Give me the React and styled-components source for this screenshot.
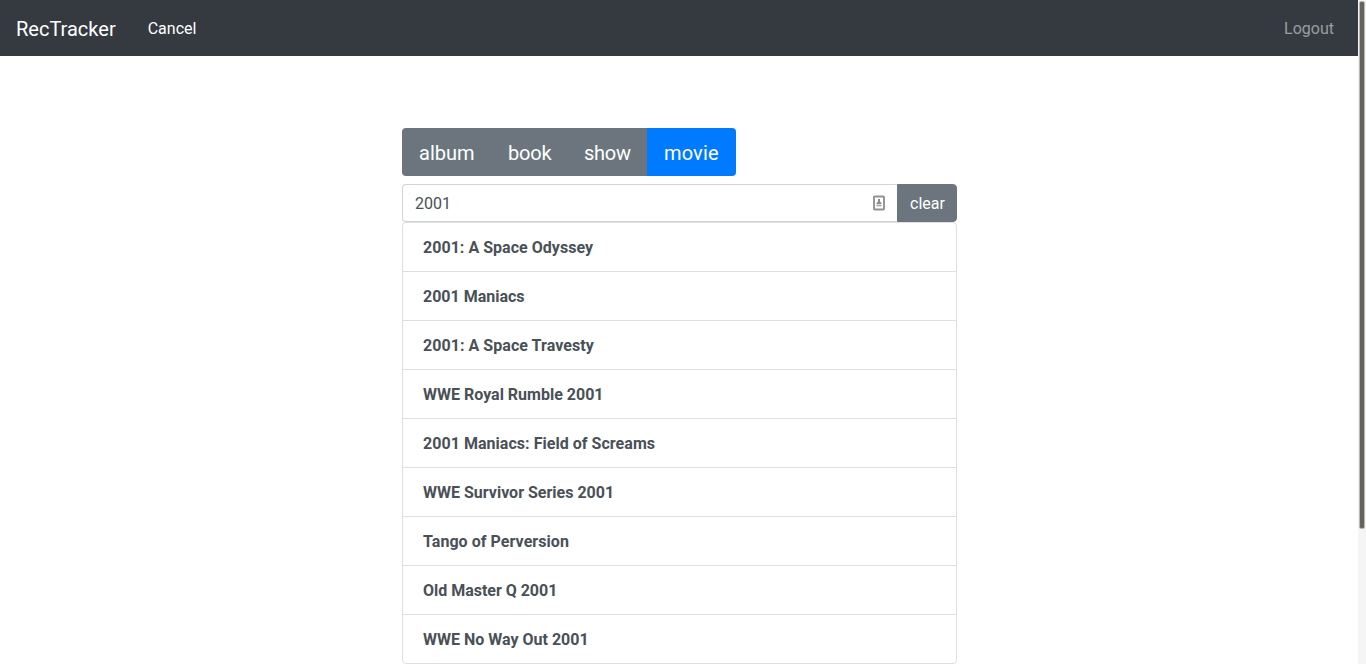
import React, { useState } from "react";
import styled, { createGlobalStyle } from "styled-components";

const GlobalStyle = createGlobalStyle`
  *, *::before, *::after { box-sizing: border-box; }
  body {
    margin: 0;
    background: #fff;
    color: #212529;
    font: 400 16px/1.5 Roboto, "Liberation Sans", sans-serif;
    overflow: hidden;
  }
  button, input { font-family: inherit; margin: 0; }
`;

const Screen = styled.div`
  display: flex;
  height: 664px;
  overflow: hidden;
`;

const Page = styled.div`
  flex: 1;
  min-width: 0;
`;

const Navbar = styled.nav`
  display: flex;
  align-items: center;
  height: 56px;
  padding: 10px 16px 8px;
  background: #343a40;
`;

const Brand = styled.a`
  margin-right: 24px;
  color: #fff;
  font-size: 20px;
  line-height: 30px;
`;

const NavLink = styled.a`
  padding: 8px;
  color: ${(p) => (p.$active ? "#fff" : "rgba(255, 255, 255, 0.5)")};
  margin-left: ${(p) => (p.$end ? "auto" : "0")};
`;

const Content = styled.main`
  width: 555px;
  margin: 72px 0 0 402px;
`;

const ButtonGroup = styled.div`
  display: grid;
  grid-template-columns: 89px 76px 80px 89px;
  width: 334px;
  margin-bottom: 8px;
  border-radius: 4px;
  overflow: hidden;
`;

const TypeButton = styled.button`
  height: 48px;
  padding: 10px 0 8px 17px;
  border: 0;
  background: ${(p) => (p.$active ? "#007bff" : "#6c757d")};
  color: #fff;
  font-size: 20px;
  line-height: 30px;
  text-align: left;
  white-space: nowrap;
  letter-spacing: ${(p) => p.$tracking}px;
`;

const SearchRow = styled.div`
  display: flex;
  height: 38px;
`;

const SearchField = styled.label`
  display: flex;
  align-items: center;
  flex: 1;
  min-width: 0;
  padding: 0 12px;
  border: 1px solid #ced4da;
  border-right: 0;
  border-radius: 4px 0 0 4px;
`;

const SearchInput = styled.input`
  flex: 1;
  min-width: 0;
  padding: 2px 0 0;
  border: 0;
  outline: 0;
  background: transparent;
  color: #495057;
  font-size: 16px;
  line-height: 24px;
`;

const ClearButton = styled.button`
  width: 60px;
  padding: 7px 0 5px 1px;
  border: 1px solid #6c757d;
  border-radius: 0 4px 4px 0;
  background: #6c757d;
  color: #fff;
  font-size: 16px;
  line-height: 24px;
`;

const Results = styled.ul`
  list-style: none;
  margin: 0;
  padding: 0;
  border: 1px solid #dfdfdf;
  border-radius: 4px;
`;

const Result = styled.li`
  height: 49px;
  padding: 13px 20px 11px;
  border-bottom: 1px solid #dfdfdf;
  color: #495057;
  font-weight: 700;
  letter-spacing: ${(p) => p.$tracking}px;

  &:last-child { height: 48px; border-bottom: 0; }
`;

const ScrollTrack = styled.div`
  width: 8px;
  padding: 1px;
  background: #f5f5f5;
`;

const ScrollThumb = styled.div`
  height: 528px;
  border: 1px solid #bab8b6;
  border-radius: 2px;
  background: #66625e;
`;

const ContactIcon = () => (
  <svg width="12" height="16" viewBox="0 0 12 16" fill="none">
    <rect x="1" y="1.5" width="10" height="13" rx="0.8" stroke="#929292" strokeWidth="1.9" />
    <path d="M5 4h2v2.5l1.5 1.5v1h-5v-1L5 6.5z" fill="#8a8a8a" />
    <path d="M3.5 10.5h5" stroke="#a0a0a0" strokeWidth="1.6" />
  </svg>
);

const types = [
  { name: "album", tracking: 0 },
  { name: "book", tracking: -0.2 },
  { name: "show", tracking: -0.25 },
  { name: "movie", tracking: 0.15 },
];

const movies = [
  { title: "2001: A Space Odyssey", tracking: 0.03 },
  { title: "2001 Maniacs", tracking: 0 },
  { title: "2001: A Space Travesty", tracking: 0.05 },
  { title: "WWE Royal Rumble 2001", tracking: 0 },
  { title: "2001 Maniacs: Field of Screams", tracking: 0.04 },
  { title: "WWE Survivor Series 2001", tracking: 0 },
  { title: "Tango of Perversion", tracking: 0.05 },
  { title: "Old Master Q 2001", tracking: -0.02 },
  { title: "WWE No Way Out 2001", tracking: 0 },
];

export default function App() {
  const [type, setType] = useState("movie");
  const [query, setQuery] = useState("2001");

  return (
    <Screen>
      <GlobalStyle />
      <Page>
        <Navbar>
          <Brand>RecTracker</Brand>
          <NavLink $active>Cancel</NavLink>
          <NavLink $end>Logout</NavLink>
        </Navbar>
        <Content>
          <ButtonGroup>
            {types.map(({ name, tracking }) => (
              <TypeButton
                key={name}
                $active={name === type}
                $tracking={tracking}
                onClick={() => setType(name)}
              >
                {name}
              </TypeButton>
            ))}
          </ButtonGroup>
          <SearchRow>
            <SearchField>
              <SearchInput value={query} onChange={(e) => setQuery(e.target.value)} />
              <ContactIcon />
            </SearchField>
            <ClearButton onClick={() => setQuery("")}>clear</ClearButton>
          </SearchRow>
          <Results>
            {movies.map(({ title, tracking }) => (
              <Result key={title} $tracking={tracking}>
                {title}
              </Result>
            ))}
          </Results>
        </Content>
      </Page>
      <ScrollTrack>
        <ScrollThumb />
      </ScrollTrack>
    </Screen>
  );
}
